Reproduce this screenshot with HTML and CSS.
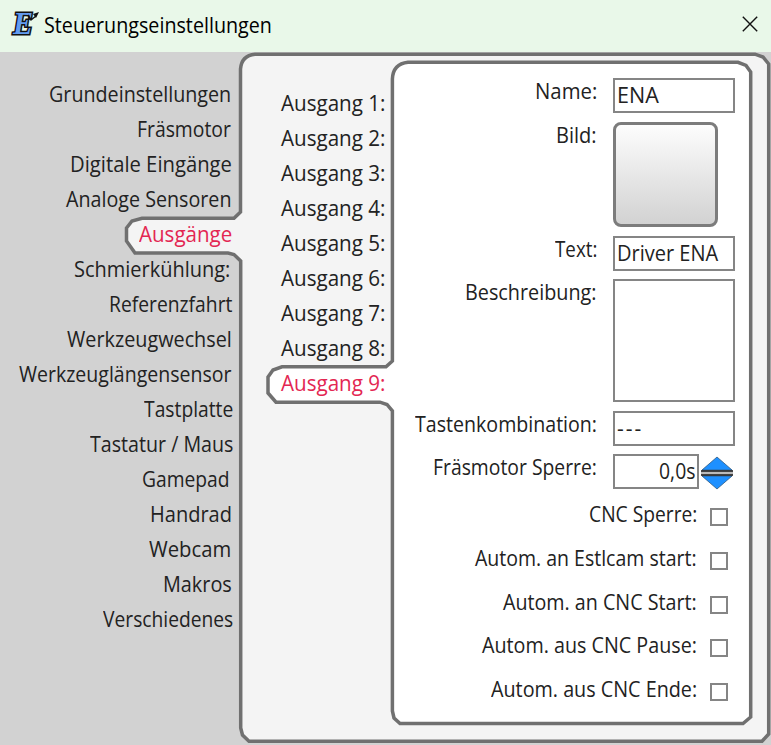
FILE: index.html
```html
<!DOCTYPE html>
<html lang="de">
<head>
<meta charset="utf-8">
<title>Steuerungseinstellungen</title>
<link rel="stylesheet" href="styles.css">
</head>
<body>
<div class="window">
  <header class="titlebar">
    <svg class="logo" width="30" height="28" viewBox="0 0 30 28">
      <text class="logo-letter" x="2" y="24" textLength="20" lengthAdjust="spacingAndGlyphs">E</text>
      <path d="M17 5l3 5 5-4" fill="none" stroke="#111" stroke-width="1.5"/>
      <path d="M22 4l6-2-3 6z" fill="#111"/>
    </svg>
    <h1 class="title"><span class="fit" data-width="228">Steuerungseinstellungen</span></h1>
    <svg class="close" width="16" height="16" viewBox="0 0 16 16"><path d="M.8.8l14.4 14.4M15.2.8L.8 15.2" stroke="#111" stroke-width="1.4"/></svg>
  </header>
  <main class="content">
    <svg class="frames" width="771" height="693" viewBox="0 52 771 693">
      <path fill="#f4f4f4" d="M255 54.2H755L763 57L768.7 64V734L762 741.3H249L242.500 735L240.700 728V261L234 254.500L228 253H135L126.500 241V228L132 221L142 218.300H234L240.500 212V69Q241.500 55.500 255 54.200Z"/>
      <path fill="#fff" d="M408 62.300H738L746 65.500L750.700 72V717L743 723.500H400L394 718L392.400 711V411L387 404.500L380 402.200H276L268 393V377L273 370L282 366.800H386L392.400 361V79Q393 64 408 62.300Z"/>
    </svg>
    <nav class="menu">
      <a><span class="fit" data-width="182">Grundeinstellungen</span></a>
      <a><span class="fit" data-width="94">Fräsmotor</span></a>
      <a class="r1"><span class="fit" data-width="162">Digitale Eingänge</span></a>
      <a><span class="fit" data-width="166">Analoge Sensoren</span></a>
      <a class="active r1"><span class="fit" data-width="93">Ausgänge</span></a>
      <a class="l1"><span class="fit" data-width="156">Schmierkühlung:</span></a>
      <a class="r1"><span class="fit" data-width="123">Referenzfahrt</span></a>
      <a class="r1"><span class="fit" data-width="165">Werkzeugwechsel</span></a>
      <a class="r1"><span class="fit" data-width="213">Werkzeuglängensensor</span></a>
      <a class="r2"><span class="fit" data-width="89">Tastplatte</span></a>
      <a class="r2"><span class="fit" data-width="143">Tastatur / Maus</span></a>
      <a class="l1"><span class="fit" data-width="88">Gamepad</span></a>
      <a class="r1"><span class="fit" data-width="82">Handrad</span></a>
      <a><span class="fit" data-width="82">Webcam</span></a>
      <a class="r1"><span class="fit" data-width="69">Makros</span></a>
      <a class="r2"><span class="fit" data-width="130">Verschiedenes</span></a>
    </nav>
    <nav class="menu outputs">
      <a><span class="fit" data-width="105">Ausgang 1:</span></a>
      <a><span class="fit" data-width="105">Ausgang 2:</span></a>
      <a><span class="fit" data-width="105">Ausgang 3:</span></a>
      <a><span class="fit" data-width="105">Ausgang 4:</span></a>
      <a><span class="fit" data-width="105">Ausgang 5:</span></a>
      <a><span class="fit" data-width="105">Ausgang 6:</span></a>
      <a><span class="fit" data-width="105">Ausgang 7:</span></a>
      <a><span class="fit" data-width="105">Ausgang 8:</span></a>
      <a class="active"><span class="fit" data-width="105">Ausgang 9:</span></a>
    </nav>
    <section class="form">
      <div class="row"><label><span class="fit" data-width="62">Name:</span></label><div class="field"><span class="fit" data-width="42">ENA</span></div></div>
      <div class="row row-image"><label><span class="fit" data-width="41">Bild:</span></label><div class="image-button"></div></div>
      <div class="row"><label><span class="fit" data-width="42">Text:</span></label><div class="field"><span class="fit" data-width="101">Driver ENA</span></div></div>
      <div class="row row-area"><label><span class="fit" data-width="132">Beschreibung:</span></label><div class="field area"></div></div>
      <div class="row"><label><span class="fit" data-width="182">Tastenkombination:</span></label><div class="field"><span class="dashes">---</span></div></div>
      <div class="row"><label><span class="fit" data-width="164">Fräsmotor Sperre:</span></label>
        <div class="field number"><span class="fit" data-width="36">0,0s</span></div>
        <svg class="spinner" width="34" height="34" viewBox="0 0 34 34">
          <path d="M17 1L32 14H2zM17 33L32 20H2z" fill="#1e90ff" stroke="#315a80" stroke-width=".8"/>
          <path d="M1 17h32" stroke="#bbb" stroke-width="3"/>
          <path d="M1 15h32M1 19h32" stroke="#111" stroke-width="1.500"/>
        </svg>
      </div>
      <div class="row check"><label><span class="fit" data-width="108">CNC Sperre:</span></label><i class="box"></i></div>
      <div class="row check"><label><span class="fit" data-width="222">Autom. an Estlcam start:</span></label><i class="box"></i></div>
      <div class="row check"><label><span class="fit" data-width="194">Autom. an CNC Start:</span></label><i class="box"></i></div>
      <div class="row check"><label><span class="fit" data-width="215">Autom. aus CNC Pause:</span></label><i class="box"></i></div>
      <div class="row check"><label><span class="fit" data-width="206">Autom. aus CNC Ende:</span></label><i class="box"></i></div>
    </section>
  </main>
</div>
<script src="script.js"></script>
</body>
</html>
```

FILE: styles.css
```css
* { box-sizing: border-box; }
body {
  margin: 0;
  overflow: hidden;
  font-family: "Open Sans", "Noto Sans", sans-serif;
  font-size: 21px;
  color: #222;
}
.window { width: 771px; height: 745px; display: flex; flex-direction: column; background: #d2d2d2; }
.titlebar {
  flex: none;
  height: 52px;
  display: flex;
  align-items: center;
  padding: 0 13px 0 11px;
  background: #e9f8e9;
}
.logo { flex: none; margin-top: -5px; overflow: visible; }
.logo-letter {
  font: italic bold 31px "Liberation Serif", serif;
  fill: #629bf0;
  stroke: #111;
  stroke-width: 3px;
  paint-order: stroke;
}
.title { margin: -2px auto 0 3px; font-size: 21px; font-weight: 400; line-height: 50px; color: #000; }
.close { flex: none; margin-top: -4px; }
.content { position: relative; flex: 1; display: flex; align-items: flex-start; }
.frames { position: absolute; left: 0; top: 0; }
.frames path { stroke: #707070; stroke-width: 3.5; }
.menu { position: relative; width: 231px; padding-top: 24.5px; display: flex; flex-direction: column; align-items: flex-end; }
.menu a { line-height: 35px; height: 35px; white-space: nowrap; }
.menu .active { color: #e32652; }
.menu .r1 { margin-right: -1px; }
.menu .r2 { margin-right: -2px; }
.menu .l1 { margin-right: 1px; }
.outputs { width: 154px; padding-top: 33.5px; }
.fit { display: inline-block; white-space: nowrap; transform-origin: 100% 50%; }
.title .fit, .field .fit { transform-origin: 0 50%; }
.form { position: relative; width: 351px; padding-top: 26px; }
.row { display: flex; align-items: flex-start; height: 43.75px; }
.row-image { height: 113.75px; }
.row-area { height: 131.25px; }
.row label { width: 212px; margin-right: 16px; text-align: right; line-height: 27px; }
.field {
  width: 122px;
  height: 35px;
  padding-left: 2px;
  border: 2px solid #858585;
  line-height: 31px;
  background: #fff;
  white-space: nowrap;
}
.area { height: 123px; }
.dashes { letter-spacing: 2px; }
.number { width: 86px; padding: 0 2px; text-align: right; }
.number .fit { transform-origin: 100% 50%; }
.spinner { flex: none; margin: 2px 0 0 1px; }
.image-button {
  width: 105px;
  height: 105px;
  border: 3px solid #7c7c7c;
  border-radius: 8px;
  background: linear-gradient(#fdfdfd, #d2d2d2);
}
.check label { width: 312px; margin-right: 13px; line-height: 32px; }
.box { width: 18px; height: 18px; margin-top: 10px; border: 2px solid #858585; background: #fff; }
```

FILE: script.js
```js
document.querySelectorAll('.fit').forEach(function (el) {
  var scale = Number(el.dataset.width) / el.offsetWidth;
  el.style.transform = 'scaleX(' + scale + ')';
});
```
